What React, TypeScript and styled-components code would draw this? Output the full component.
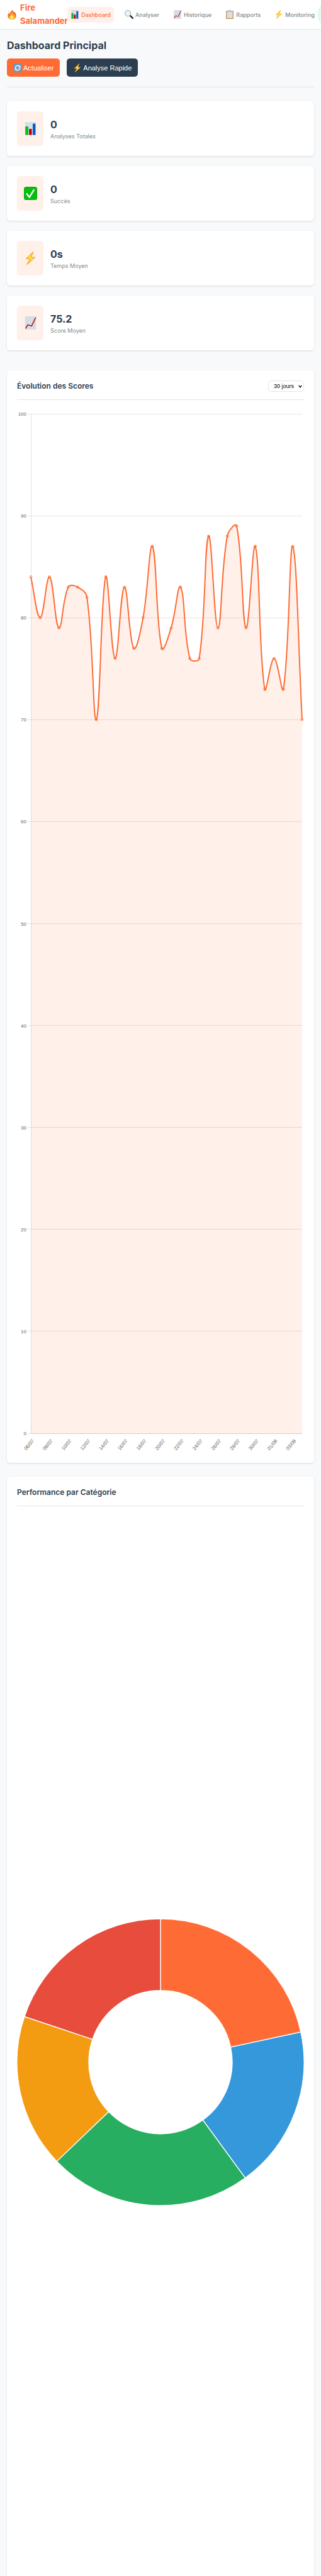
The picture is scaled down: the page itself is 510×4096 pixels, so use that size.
import React from "react";
import styled, { createGlobalStyle } from "styled-components";

const GlobalStyle = createGlobalStyle`
  *, *::before, *::after { box-sizing: border-box; }
  body {
    margin: 0;
    background: #f8f9fb;
    color: #2c3e50;
    font-family: Inter, "Liberation Sans", sans-serif;
    overflow-x: hidden;
  }
  h1, h2, p { margin: 0; }
`;

/* ---------- icons ---------- */

type IconName = "fire" | "bars" | "search" | "trend" | "clipboard" | "bolt" | "check" | "refresh";

const drawings: Record<IconName, React.ReactNode> = {
  fire: (
    <>
      <path d="M12.500 0.500c.8 3 3.600 4.600 5 7.400.4-.8.4-1.600.2-2.400 2.600 2 4.300 5.500 4.300 9.500 0 5.300-4 9-10 9s-10-3.700-10-9c0-3 1-4.700 2-6.500.2 1.500.8 2.500 1.800 3C5.400 7.500 11.500 6 12.500.5z" fill="#f2602b" />
      <path d="M12.500 5c.5 3.500 4.500 5 5 9 .5-.5.8-1.200.8-2 1.500 2 1.700 3.500 1.700 5 0 4-3.500 6.500-8 6.500S4 21 4 17c0-1.500.5-2.500 1-3.500.5 1 1 1.500 2 1.800C6.500 10.500 11.500 10 12.500 5z" fill="#fba52c" />
      <path d="M12 12c.5 2.500 3.500 3.500 3.500 6 .4-.3.6-.6.8-1 .5 3.500-1.300 6.200-4.300 6.200S7 21.500 7 19c0-1 .3-1.600.6-2.200.4.7.8 1 1.400 1.200C9 15 11.500 14.500 12 12z" fill="#fff04d" />
      <circle cx="4" cy="5" r="1.200" fill="#f58a6a" />
    </>
  ),
  bars: (
    <>
      <rect x="2" y="0" width="20" height="24" fill="#d5e0e9" />
      <rect x="2.500" y="8" width="5.500" height="15.500" fill="#0abf1c" />
      <rect x="9.300" y="12.500" width="5" height="11" fill="#c00000" />
      <rect x="16" y="3" width="5" height="20.500" fill="#0a5bc4" />
    </>
  ),
  search: (
    <>
      <path d="M15 15l7 7" stroke="#1d1d1f" strokeWidth="4" strokeLinecap="round" />
      <circle cx="9" cy="9" r="8" fill="#eef3f5" stroke="#8f9698" strokeWidth="1.600" />
    </>
  ),
  trend: (
    <>
      <rect x="2" y="0" width="20" height="24" fill="#d3dee6" />
      <path d="M3 22l4-6.500 7 2L21.500 2" fill="none" stroke="#c10a12" strokeWidth="1.800" />
    </>
  ),
  clipboard: (
    <>
      <rect x="2" y="2" width="20" height="22" rx="1" fill="#b8864f" />
      <rect x="4" y="4" width="16" height="18" fill="#dedede" />
      <rect x="7" y="1" width="10" height="4" rx="1" fill="#b5bcc1" />
      <circle cx="12" cy="1.500" r="1.500" fill="#b5bcc1" />
    </>
  ),
  bolt: <path d="M17 .5L4 13.200h7L5.500 23.500 20 10.300h-7.200z" fill="#ffe14d" stroke="#f7a11b" strokeWidth="1.200" strokeLinejoin="round" />,
  check: (
    <>
      <rect width="24" height="24" rx="4" fill="#04a80b" />
      <rect x="1" y="1" width="22" height="22" rx="3" fill="#06bf0d" />
      <path d="M4.500 12l5.500 7L18.500 5" fill="none" stroke="#fff" strokeWidth="2.600" />
    </>
  ),
  refresh: (
    <>
      <rect width="24" height="24" rx="4" fill="#6f97b8" />
      <path d="M5.500 12a6.800 6.800 0 0 1 11.500-4.500M18.500 12A6.800 6.800 0 0 1 7 16.500" fill="none" stroke="#fff" strokeWidth="2.400" />
      <path d="M19.500 5v6h-6zM4.500 19v-6h6z" fill="#fff" />
    </>
  ),
};

const IconSvg = styled.svg<{ $size: number }>`
  display: block;
  flex: none;
  width: ${(p) => p.$size}px;
  height: ${(p) => p.$size}px;
`;

const Icon = ({ name, size }: { name: IconName; size: number }) => (
  <IconSvg $size={size} viewBox="0 0 24 24" aria-hidden="true">
    {drawings[name]}
  </IconSvg>
);

/* ---------- header ---------- */

const Header = styled.header`
  display: flex;
  align-items: center;
  min-height: 47px;
  padding: 2px 11px;
  background: #fff;
  border-bottom: 1px solid #dfe6e9;
  overflow: hidden;
`;

const Brand = styled.a`
  display: flex;
  align-items: center;
  flex: none;
  gap: 5px;
  width: 96px;
  color: #ff6b35;
  font-size: 13px;
  font-weight: 700;
  line-height: 21px;
  text-decoration: none;
`;

const Nav = styled.nav`
  display: flex;
  flex: none;
  gap: 12px;
`;

const NavLink = styled.a<{ $active?: boolean }>`
  display: flex;
  align-items: center;
  gap: 3px;
  height: 25px;
  padding: 0 5px;
  border-radius: 5px;
  background: ${(p) => (p.$active ? "#fff0ea" : "transparent")};
  color: ${(p) => (p.$active ? "#ff6b35" : "#7f8c8d")};
  font-size: 9px;
  font-weight: 500;
  text-decoration: none;
  white-space: nowrap;
`;

const StatusPill = styled.div`
  flex: none;
  width: 64px;
  height: 34px;
  padding: 14px 5px;
  border-radius: 13px;
  background: #e9f7ef;
`;

const StatusDot = styled.span`
  display: block;
  width: 5px;
  height: 5px;
  border-radius: 50%;
  background: #27ae60;
`;

/* ---------- page ---------- */

const Main = styled.main`
  padding: 15px 11px 0;
`;

const PageHeader = styled.div`
  display: flex;
  flex-direction: column;
  gap: 11px;
  padding-bottom: 16px;
  border-bottom: 1px solid #dfe6e9;
`;

const PageTitle = styled.h1`
  font-size: 16px;
  font-weight: 700;
  line-height: 20px;
`;

const Actions = styled.div`
  display: flex;
  gap: 11px;
`;

const Button = styled.button<{ $dark?: boolean }>`
  display: flex;
  align-items: center;
  gap: 2px;
  height: 29px;
  padding: 0 10px;
  border: 0;
  border-radius: 5px;
  background: ${(p) => (p.$dark ? "#2c3e50" : "#ff6b35")};
  color: #fff;
  font-family: "Liberation Sans", Arial, sans-serif;
  font-size: 11px;
`;

const Stats = styled.section`
  display: flex;
  flex-direction: column;
  gap: 16px;
  margin: 22px 0 32px;
`;

const Card = styled.article`
  background: #fff;
  border-radius: 5px;
  box-shadow: 0 1px 3px rgba(0, 0, 0, 0.12);
`;

const StatCard = styled(Card)`
  display: flex;
  align-items: stretch;
  gap: 11px;
  height: 87px;
  padding: 16px;
`;

const StatIcon = styled.div`
  display: flex;
  align-items: center;
  justify-content: center;
  width: 42px;
  border-radius: 5px;
  background: #fff0ea;
`;

const StatText = styled.div`
  display: flex;
  flex-direction: column;
  justify-content: center;
`;

const StatValue = styled.p`
  font-size: 16px;
  font-weight: 700;
  line-height: 24px;
`;

const StatLabel = styled.p`
  color: #7f8c8d;
  font-size: 9px;
  line-height: 14px;
`;

const Charts = styled.section`
  display: flex;
  flex-direction: column;
  gap: 22px;
`;

const ChartCard = styled(Card)<{ $open?: boolean }>`
  padding: ${(p) => (p.$open ? "16px 16px 0" : "16px")};
  border-radius: ${(p) => (p.$open ? "5px 5px 0 0" : "5px")};
`;

const ChartHeader = styled.header`
  display: flex;
  align-items: center;
  justify-content: space-between;
  min-height: 31px;
  margin-bottom: 16px;
  padding-bottom: 12px;
  border-bottom: 1px solid #dfe6e9;
`;

const ChartTitle = styled.h2`
  font-size: 12px;
  font-weight: 600;
  line-height: 18px;
`;

const PeriodBox = styled.span`
  position: relative;
  display: block;
`;

const PeriodSelect = styled.select`
  display: block;
  appearance: none;
  width: 57px;
  height: 18px;
  padding: 0 12px 0 8px;
  border: 1px solid #dfe6e9;
  border-radius: 5px;
  background: #fff;
  color: #000;
  font-family: "Liberation Sans", Arial, sans-serif;
  font-size: 9px;
`;

const Caret = styled.svg`
  position: absolute;
  top: 7px;
  right: 3px;
  width: 6px;
  height: 5px;
  pointer-events: none;
`;

const Plot = styled.svg`
  display: block;
  width: 100%;
  height: auto;
`;

const TickText = styled.text`
  fill: #666;
  font-family: "Liberation Sans", Arial, sans-serif;
  font-size: 8px;
`;

/* ---------- line chart ---------- */

const scores = [
  84, 80, 84, 79, 83, 83, 82, 70, 84, 76, 83, 77, 80, 87, 77, 79, 83, 76, 76, 88, 79, 88, 89, 79, 87, 73, 76, 73, 87, 70,
];
const dates = [
  "06/07", "08/07", "10/07", "12/07", "14/07", "16/07", "18/07", "20/07", "22/07", "24/07", "26/07", "28/07", "30/07",
  "01/08", "03/08",
];

const plot = { left: 22, right: 453, top: 6, bottom: 1627 };
const xAt = (i: number) => plot.left + (i * (plot.right - plot.left)) / (scores.length - 1);
const yAt = (v: number) => plot.bottom - (v * (plot.bottom - plot.top)) / 100;

type Point = { x: number; y: number };
const points: Point[] = scores.map((v, i) => ({ x: xAt(i), y: yAt(v) }));

// Cardinal spline whose handles are weighted by the distance to each neighbour.
const TENSION = 0.4;
const handles = points.map((p, i) => {
  const prev = points[i - 1] ?? p;
  const next = points[i + 1] ?? p;
  const d01 = Math.hypot(p.x - prev.x, p.y - prev.y);
  const d12 = Math.hypot(next.x - p.x, next.y - p.y);
  const a = (TENSION * d01) / (d01 + d12);
  const b = (TENSION * d12) / (d01 + d12);
  return {
    before: { x: p.x - a * (next.x - prev.x), y: p.y - a * (next.y - prev.y) },
    after: { x: p.x + b * (next.x - prev.x), y: p.y + b * (next.y - prev.y) },
  };
});
const curve = points
  .map((p, i) => {
    if (i === 0) return `M${p.x} ${p.y}`;
    const a = handles[i - 1].after;
    const b = handles[i].before;
    return `C${a.x} ${a.y} ${b.x} ${b.y} ${p.x} ${p.y}`;
  })
  .join("");

const ScoreChart = () => (
  <Plot viewBox="0 0 456 1658" role="img" aria-label="Évolution des Scores">
    <g stroke="#e5e5e5" shapeRendering="crispEdges">
      {[0, 10, 20, 30, 40, 50, 60, 70, 80, 90, 100].map((v) => (
        <line key={v} x1={plot.left - 5} x2={plot.right} y1={yAt(v)} y2={yAt(v)} />
      ))}
      <line x1={plot.left} x2={plot.left} y1={plot.top} y2={plot.bottom} />
      <line x1={plot.left} x2={plot.right} y1={plot.bottom} y2={plot.bottom} stroke="#cfcfcf" />
    </g>
    {[0, 10, 20, 30, 40, 50, 60, 70, 80, 90, 100].map((v) => (
      <TickText key={v} x={plot.left - 7} y={yAt(v) + 3} textAnchor="end">
        {v}
      </TickText>
    ))}
    {dates.map((d, i) => {
      const x = xAt(i * 2) - 3;
      const y = plot.bottom + 18;
      return (
        <TickText key={d} x={x} y={y} dy="3" textAnchor="middle" transform={`rotate(-50 ${x} ${y})`}>
          {d}
        </TickText>
      );
    })}
    <path d={`${curve}L${plot.right} ${plot.bottom}L${plot.left} ${plot.bottom}Z`} fill="#ff6b35" fillOpacity="0.1" />
    <path d={curve} fill="none" stroke="#ff6b35" strokeWidth="2" strokeLinejoin="round" />
    {points.map((p, i) => (
      <circle key={i} cx={p.x} cy={p.y} r="2" fill="#ff6b35" fillOpacity="0.1" stroke="#ff6b35" strokeWidth="0.7" />
    ))}
  </Plot>
);

/* ---------- doughnut chart ---------- */

const slices = [
  { value: 85, color: "#ff6b35" },
  { value: 72, color: "#3498db" },
  { value: 90, color: "#27ae60" },
  { value: 68, color: "#f39c12" },
  { value: 78, color: "#e74c3c" },
];
const ring = { cx: 228, cy: 868, outer: 228, inner: 114 };
const total = slices.reduce((sum, s) => sum + s.value, 0);

const polar = (r: number, share: number) => {
  const t = share * 2 * Math.PI;
  return `${ring.cx + r * Math.sin(t)} ${ring.cy - r * Math.cos(t)}`;
};

const slicePath = (index: number) => {
  const before = slices.slice(0, index).reduce((sum, s) => sum + s.value, 0);
  const from = before / total;
  const to = (before + slices[index].value) / total;
  return `M${polar(ring.outer, from)}A${ring.outer} ${ring.outer} 0 0 1 ${polar(ring.outer, to)}L${polar(
    ring.inner,
    to
  )}A${ring.inner} ${ring.inner} 0 0 0 ${polar(ring.inner, from)}Z`;
};

const CategoryChart = () => (
  <Plot viewBox="0 0 456 1685" role="img" aria-label="Performance par Catégorie">
    {slices.map((s, i) => (
      <path key={s.color} d={slicePath(i)} fill={s.color} stroke="#fff" strokeWidth="1.3" />
    ))}
  </Plot>
);

/* ---------- app ---------- */

const links: { icon: IconName; label: string }[] = [
  { icon: "bars", label: "Dashboard" },
  { icon: "search", label: "Analyser" },
  { icon: "trend", label: "Historique" },
  { icon: "clipboard", label: "Rapports" },
  { icon: "bolt", label: "Monitoring" },
];

const stats: { icon: IconName; value: string; label: string }[] = [
  { icon: "bars", value: "0", label: "Analyses Totales" },
  { icon: "check", value: "0", label: "Succès" },
  { icon: "bolt", value: "0s", label: "Temps Moyen" },
  { icon: "trend", value: "75.2", label: "Score Moyen" },
];

export default function App() {
  return (
    <>
      <GlobalStyle />
      <Header>
        <Brand href="#">
          <Icon name="fire" size={16} />
          <span>
            Fire
            <br />
            Salamander
          </span>
        </Brand>
        <Nav>
          {links.map((l, i) => (
            <NavLink key={l.label} href="#" $active={i === 0}>
              <Icon name={l.icon} size={14} />
              {l.label}
            </NavLink>
          ))}
        </Nav>
        <StatusPill>
          <StatusDot />
        </StatusPill>
      </Header>
      <Main>
        <PageHeader>
          <PageTitle>Dashboard Principal</PageTitle>
          <Actions>
            <Button type="button">
              <Icon name="refresh" size={14} />
              Actualiser
            </Button>
            <Button type="button" $dark>
              <Icon name="bolt" size={14} />
              Analyse Rapide
            </Button>
          </Actions>
        </PageHeader>
        <Stats>
          {stats.map((s) => (
            <StatCard key={s.label}>
              <StatIcon>
                <Icon name={s.icon} size={21} />
              </StatIcon>
              <StatText>
                <StatValue>{s.value}</StatValue>
                <StatLabel>{s.label}</StatLabel>
              </StatText>
            </StatCard>
          ))}
        </Stats>
        <Charts>
          <ChartCard>
            <ChartHeader>
              <ChartTitle>Évolution des Scores</ChartTitle>
              <PeriodBox>
                <PeriodSelect aria-label="Période" defaultValue="30">
                  <option value="30">30 jours</option>
                </PeriodSelect>
                <Caret viewBox="0 0 6 5" aria-hidden="true">
                  <path d="M0.700 1L3 3.700 5.300 1" fill="none" stroke="#000" strokeWidth="1.300" />
                </Caret>
              </PeriodBox>
            </ChartHeader>
            <ScoreChart />
          </ChartCard>
          <ChartCard $open>
            <ChartHeader>
              <ChartTitle>Performance par Catégorie</ChartTitle>
            </ChartHeader>
            <CategoryChart />
          </ChartCard>
        </Charts>
      </Main>
    </>
  );
}
